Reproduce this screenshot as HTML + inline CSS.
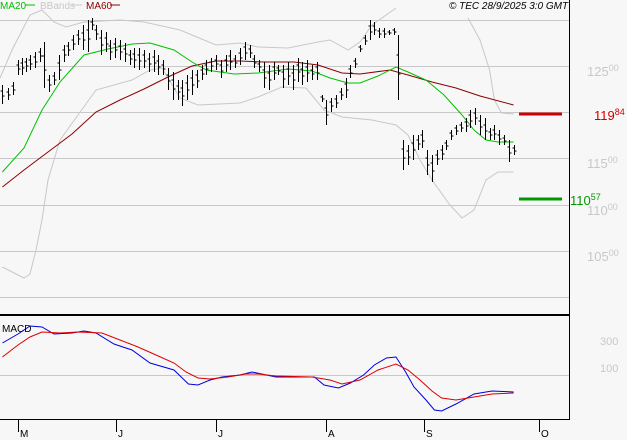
<!DOCTYPE html>
<html><head><meta charset="utf-8"><style>
html,body{margin:0;padding:0;background:#f7f7f7;width:627px;height:440px;overflow:hidden}
svg{display:block;font-family:"Liberation Sans",sans-serif}
</style></head><body>
<svg width="627" height="440" viewBox="0 0 627 440" xmlns="http://www.w3.org/2000/svg">
<rect width="627" height="440" fill="#f7f7f7"/>
<g stroke="#c8c8c8" stroke-width="1">
<line x1="0" y1="20.5" x2="569" y2="20.5"/>
<line x1="0" y1="66.5" x2="569" y2="66.5"/>
<line x1="0" y1="112.5" x2="569" y2="112.5"/>
<line x1="0" y1="158.5" x2="569" y2="158.5"/>
<line x1="0" y1="205.5" x2="569" y2="205.5"/>
<line x1="0" y1="251.5" x2="569" y2="251.5"/>
<line x1="0" y1="297.5" x2="569" y2="297.5"/>
<line x1="0" y1="375.5" x2="569" y2="375.5"/>
</g>
<g fill="none" stroke-width="1" vector-effect="non-scaling-stroke" transform="scale(1.2,1)">
<polyline stroke="#c8c8c8" vector-effect="non-scaling-stroke" points="0,78 10,50 25,15 35,10 45,22 55,27 70,22 100,20 120,22 150,30 180,45 200,43 215,47 240,48 265,42 275,40 290,50 300,42 310,25 330,8"/>
<polyline stroke="#c8c8c8" vector-effect="non-scaling-stroke" points="390,18 400,40 408,70 412,100 418,113 428,114"/>
<polyline stroke="#c8c8c8" vector-effect="non-scaling-stroke" points="2,267 20,278 25,274 30,250 35,220 40,180 50,140 65,115 80,90 95,85 110,80 125,70 135,68 150,98 165,105 200,103 215,97 235,87 255,88 270,110 285,117 310,120 330,125 340,135 350,160 360,180 375,205 385,218 395,210 405,180 415,172 428,172"/>
<polyline stroke="#8b0000" vector-effect="non-scaling-stroke" points="2,187 20,170 40,152 60,134 80,112 100,100 120,89 140,77 160,66 180,61 200,61 220,62 245,62 265,65 285,73 300,74 325,70 340,75 360,82 380,88 400,96 428,105"/>
<polyline stroke="#00c000" vector-effect="non-scaling-stroke" points="2,172 20,148 35,110 50,82 70,55 90,49 110,44 125,43 145,50 160,62 172,70 195,74 215,73 240,69 260,71 275,78 290,83 300,83 315,76 330,67 340,72 355,80 370,95 385,115 395,130 405,140 415,142 428,142"/>
<polyline stroke="#0000dd" vector-effect="non-scaling-stroke" points="2,343 15,334 25,326 35,327 45,334 60,333 70,331 80,333 95,344 110,350 125,363 145,370 157,384 165,385 175,380 185,377 200,375 210,372 218,374 230,377 245,377 262,377 270,385 282,388 292,383 303,375 312,365 322,358 330,357 338,372 345,387 355,400 362,410 368,411 380,404 395,394 410,391 428,392"/>
<polyline stroke="#dd0000" vector-effect="non-scaling-stroke" points="2,357 15,345 25,337 35,332 50,333 65,332 85,333 100,340 115,347 130,355 145,363 155,372 165,378 175,379 190,377 205,374 215,374 230,376 260,377 275,380 285,384 300,380 315,370 330,364 340,370 350,380 360,391 368,398 380,400 395,397 410,394 428,393"/>
</g>
<path id="bars" stroke="#000" stroke-width="1" fill="none" d=""/>
<line x1="519" y1="114" x2="562" y2="114" stroke="#cc0000" stroke-width="3"/>
<line x1="519" y1="199" x2="562" y2="199" stroke="#009900" stroke-width="3"/>
<line x1="0" y1="315" x2="569" y2="315" stroke="#000" stroke-width="2"/>
<line x1="569.5" y1="0" x2="569.5" y2="420" stroke="#000"/>
<line x1="0" y1="419.5" x2="570" y2="419.5" stroke="#000"/>
<g stroke="#000"><line x1="18.5" y1="420" x2="18.5" y2="432"/><line x1="116.5" y1="420" x2="116.5" y2="432"/><line x1="216.5" y1="420" x2="216.5" y2="432"/><line x1="326.5" y1="420" x2="326.5" y2="432"/><line x1="424.5" y1="420" x2="424.5" y2="432"/><line x1="539.5" y1="420" x2="539.5" y2="432"/></g>
<g font-size="10" fill="#000"><text x="20" y="437">M</text><text x="118" y="437">J</text><text x="218" y="437">J</text><text x="328" y="437">A</text><text x="426" y="437">S</text><text x="541" y="437">O</text></g>
<g fill="#c8c8c8" font-size="13"><text x="587" y="76">125<tspan font-size="9" dy="-5">00</tspan></text>
<text x="587" y="168">115<tspan font-size="9" dy="-5">00</tspan></text>
<text x="587" y="215">110<tspan font-size="9" dy="-5">00</tspan></text>
<text x="587" y="261">105<tspan font-size="9" dy="-5">00</tspan></text>
<text x="600" y="345" font-size="11">300</text>
<text x="600" y="372" font-size="11">100</text></g>
<text x="594" y="120" font-size="13" fill="#cc0000">119<tspan font-size="9" dy="-5">84</tspan></text>
<text x="570" y="205" font-size="13" fill="#009900">110<tspan font-size="9" dy="-5">57</tspan></text>
<g font-size="10"><text x="0" y="9" fill="#00c000">MA20</text><line x1="25" y1="5" x2="35" y2="5" stroke="#00c000"/>
<text x="40" y="9" fill="#c8c8c8">BBands</text><line x1="72" y1="5" x2="82" y2="5" stroke="#c8c8c8"/>
<text x="86" y="9" fill="#8b0000">MA60</text><line x1="110" y1="5" x2="120" y2="5" stroke="#8b0000"/>
<text x="449" y="9" font-style="italic" fill="#000">© TEC 28/9/2025 3:0 GMT</text>
<text x="2" y="332" fill="#000">MACD</text></g>
<g stroke="#000" stroke-width="1" fill="none" id="bg"></g>
<script>
var b=[[2,85,104],[7,88,100],[11,82,95],[15,60,75],[18,58,75],[22,58,72],[25,55,70],[29,52,68],[33,48,62],[37,42,88],[41,75,92],[45,72,85],[49,55,80],[53,45,62],[57,42,56],[61,35,50],[65,30,45],[69,25,50],[73,20,52],[77,18,30],[80,25,40],[84,30,55],[88,32,52],[92,40,60],[96,38,58],[100,40,60],[104,43,62],[108,50,65],[112,48,68],[116,48,70],[120,50,68],[124,53,72],[128,50,72],[132,55,75],[136,60,75],[140,68,90],[144,72,100],[148,80,100],[152,80,106],[156,75,100],[160,70,95],[164,70,88],[168,65,80],[172,60,75],[176,58,72],[180,55,70],[184,60,78],[188,55,72],[192,50,70],[196,55,68],[200,48,65],[204,42,60],[208,45,58],[212,55,68],[216,60,72],[220,62,88],[224,65,90],[228,62,80],[232,65,75],[236,65,88],[240,62,85],[244,65,90],[248,58,82],[252,62,85],[256,60,82],[260,65,80],[264,62,80],[268,95,102],[272,100,125],[276,98,112],[280,95,108],[284,88,100],[288,78,98],[292,65,78],[296,58,68],[300,45,52],[304,35,45],[308,20,40],[312,22,35],[316,28,38],[320,28,38],[324,30,35],[328,28,35],[332,35,100],[336,140,170],[340,145,165],[344,135,160],[348,135,150],[352,130,148],[356,150,175],[360,155,182],[364,150,165],[368,145,160],[372,140,150],[376,130,140],[380,125,135],[384,122,132],[388,118,132],[392,110,128],[396,108,125],[400,115,135],[404,118,140],[408,128,140],[412,125,140],[416,130,145],[420,135,145],[424,140,162],[428,145,155]];
var d="";b.forEach(function(p){var x=Math.round(p[0]*1.2)+0.5;var o=p[1]+(p[2]-p[1])*0.3,c=p[1]+(p[2]-p[1])*0.6;d+="M"+x+" "+p[1]+"V"+p[2]+"M"+(x-2)+" "+o.toFixed(0)+"H"+x+"M"+x+" "+c.toFixed(0)+"H"+(x+2);});
document.getElementById("bars").setAttribute("d",d);
</script>
</svg>
</body></html>
